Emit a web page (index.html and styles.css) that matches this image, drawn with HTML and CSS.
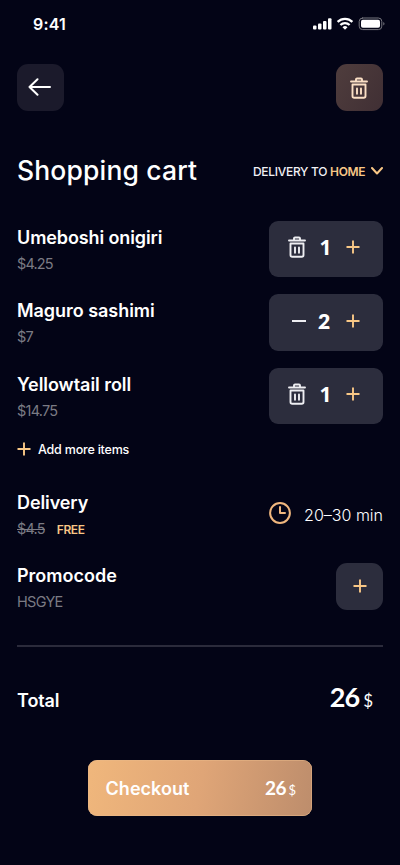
FILE: index.html
```html
<!DOCTYPE html>
<html lang="en">
<head>
<meta charset="utf-8">
<meta name="viewport" content="width=device-width, initial-scale=1">
<title>Shopping cart</title>
<link rel="stylesheet" href="styles.css">
</head>
<body>
<svg class="defs" width="0" height="0" aria-hidden="true">
  <symbol id="trash" viewBox="0 0 18 22">
    <path d="M1 4.500h16M6 4.500V2.500a1 1 0 0 1 1-1h4a1 1 0 0 1 1 1v2M2.500 7.500v11.500a1.800 1.800 0 0 0 1.800 1.800h9.400a1.800 1.800 0 0 0 1.800-1.800V7.500zM7 11.500v5.300M11 11.500v5.300"/>
  </symbol>
  <symbol id="plus" viewBox="0 0 14 14"><path d="M.5 7h13M7 .5v13"/></symbol>
</svg>
<main class="screen">
  <header class="status">
    <span class="time">9:41</span>
    <svg class="signals" width="72" height="14" viewBox="0 0 72 14">
      <g fill="#fff"><rect x="0" y="8.500" width="3.500" height="4" rx="1"/><rect x="5" y="6.500" width="3.500" height="6" rx="1"/><rect x="10" y="4" width="3.500" height="8.500" rx="1"/><rect x="15" y="1.200" width="3.500" height="11.300" rx="1"/></g>
      <g fill="none" stroke="#fff" stroke-width="2.200"><path d="M24.600 4.900a10.500 10.500 0 0 1 14.800 0"/><path d="M27.400 8a6.500 6.500 0 0 1 9.200 0"/></g>
      <path d="M29.500 10.200a3.600 3.600 0 0 1 5 0L32 12.700z" fill="#fff"/>
      <rect x="46.200" y="1" width="22.600" height="11.600" rx="3.400" fill="none" stroke="#77777f"/>
      <rect x="48" y="2.800" width="19" height="8" rx="1.800" fill="#fff"/>
      <path d="M70.300 5v3.600q1.200-.5 1.200-1.800T70.300 5z" fill="#77777f"/>
    </svg>
  </header>

  <nav class="toolbar">
    <button class="square back" aria-label="Back"><svg width="24" height="18" viewBox="0 0 24 18"><path d="M22 9H1.500M9.500 1.200L1.500 9l8 7.800"/></svg></button>
    <button class="square clear" aria-label="Clear cart"><svg class="trash"><use href="#trash"/></svg></button>
  </nav>

  <div class="heading">
    <h1>Shopping cart</h1>
    <div class="address"><span class="to">DELIVERY TO</span><span class="place">HOME</span><svg width="12" height="8" viewBox="0 0 12 8"><path d="M1 1l5 5.500L11 1"/></svg></div>
  </div>

  <section class="items">
    <article class="item">
      <div><h2 class="n1">Umeboshi onigiri</h2><p class="price">$4.25</p></div>
      <div class="stepper"><svg class="trash"><use href="#trash"/></svg><b>1</b><svg class="plus"><use href="#plus"/></svg></div>
    </article>
    <article class="item">
      <div><h2 class="n2">Maguro sashimi</h2><p class="price">$7</p></div>
      <div class="stepper"><svg class="minus" viewBox="0 0 14 2"><path d="M0 1h14"/></svg><b class="two">2</b><svg class="plus"><use href="#plus"/></svg></div>
    </article>
    <article class="item">
      <div><h2 class="n3">Yellowtail roll</h2><p class="price">$14.75</p></div>
      <div class="stepper"><svg class="trash"><use href="#trash"/></svg><b>1</b><svg class="plus"><use href="#plus"/></svg></div>
    </article>
  </section>

  <div class="more"><svg class="plus"><use href="#plus"/></svg><span>Add more items</span></div>

  <section class="row delivery">
    <div><h2 class="n4">Delivery</h2><p class="price"><s>$4.5</s><span class="free">FREE</span></p></div>
    <div class="eta"><svg width="22" height="22" viewBox="0 0 22 22"><circle cx="11" cy="11" r="9.900"/><path d="M11 5v6h5"/></svg><span>20–30 min</span></div>
  </section>

  <section class="row promo">
    <div><h2 class="n5">Promocode</h2><p class="price code">HSGYE</p></div>
    <button class="square add" aria-label="Add promocode"><svg class="plus"><use href="#plus"/></svg></button>
  </section>

  <hr>

  <section class="total"><h2 class="n6">Total</h2><div class="sum"><b>26</b><span>$</span></div></section>

  <button class="checkout"><span class="label">Checkout</span><b>26</b><span class="cur">$</span></button>
</main>
</body>
</html>
```
FILE: styles.css
```css
* { box-sizing: border-box; }
body { margin: 0; background: #030416; color: #fff; font-family: Inter, "Liberation Sans", sans-serif; }
h1, h2, p { margin: 0; white-space: nowrap; }
button { border: 0; padding: 0; color: inherit; font-family: inherit; }
svg { display: block; flex: none; fill: none; stroke-linecap: round; stroke-linejoin: round; }
.defs { position: absolute; }
.screen { width: 400px; height: 865px; padding: 0 17px; overflow: hidden; }

.status { height: 64px; padding: 14px 0 0 16px; display: flex; justify-content: space-between; }
.time { font-size: 16px; line-height: 20px; font-weight: 600; letter-spacing: .2px; }
.signals { margin: 3px -2px 0 0; }
.signals path { stroke-linecap: butt; }

.toolbar { display: flex; justify-content: space-between; height: 47px; }
.square { width: 47px; height: 47px; border-radius: 11px; display: flex; align-items: center; justify-content: center; }
.back { background: #1b1a2b; stroke: #fff; stroke-width: 2; padding: 0 2px 1px 0; }
.clear { background: linear-gradient(120deg, #4f3d3d, #402f34); stroke: #fbdfc5; stroke-width: 1.900; padding: 0 1px 0 0; }
.trash { width: 18px; height: 22px; }

.heading { height: 109.500px; padding-top: 41px; display: flex; justify-content: space-between; }
h1 { font-size: 26.500px; line-height: 36px; font-weight: 500; letter-spacing: .15px; }
.address { display: flex; align-items: center; height: 20px; margin-top: 9px; font-size: 12px; font-weight: 500; white-space: nowrap; }
.to { letter-spacing: -.3px; color: #f1f1f4; }
.place { color: #f8c786; font-weight: 600; margin-left: 3px; letter-spacing: -.4px; }
.address svg { margin-left: 6px; stroke: #f8c786; stroke-width: 2; }

.item { height: 56.500px; margin-bottom: 17px; display: flex; justify-content: space-between; }
.item > div:first-child { padding-top: 4px; }
h2 { font-size: 18px; line-height: 26px; font-weight: 600; }
.n1 { letter-spacing: -.11px; }
.n2, .n3 { letter-spacing: -.04px; }
.price { font-size: 14.500px; line-height: 24px; color: #7b7b84; margin-top: 1px; letter-spacing: -.72px; }
.item .price { letter-spacing: -.85px; }
.item:nth-child(3) .price { letter-spacing: -.75px; }
.stepper { width: 114px; height: 56.500px; padding: 0 23px 3px 19px; background: #2c2d3d; border-radius: 9px; display: grid; grid-template-columns: 19px 34px 19px; align-items: center; stroke: #eeeef2; stroke-width: 1.900; }
.stepper b { font: 700 21px/26px "Open Sans", sans-serif; text-align: center; padding-left: 3px; stroke: none; }
.stepper .two { font: 800 21px/26px Lato, sans-serif; padding-left: 0; }
.minus { width: 14px; height: 2px; justify-self: end; margin-right: 1px; }
.plus { width: 14px; height: 14px; stroke: #f8c786; stroke-width: 1.900; stroke-linecap: butt; }
.stepper .plus { justify-self: end; }

.more { height: 20px; margin-top: -2px; display: flex; align-items: center; gap: 7px; font-size: 12.500px; font-weight: 500; letter-spacing: -.2px; }

.row { display: flex; justify-content: space-between; height: 73px; }
.delivery { margin-top: 30.500px; }
.n4 { letter-spacing: -.1px; }
.price s { letter-spacing: -.8px; }
.price.code { letter-spacing: -.7px; }
.free { color: #f8c786; font-weight: 600; font-size: 12px; margin-left: 12px; letter-spacing: -.4px; }
s { text-decoration-thickness: 1px; }
.eta { display: flex; height: 22px; margin-top: 12px; align-items: center; gap: 13px; font-size: 16px; font-weight: 300; white-space: nowrap; }
.eta svg { stroke: #f0b77e; stroke-width: 2; }
.eta span { padding-top: 4px; }
.add { background: #2c2d3d; margin-top: 0; }

hr { height: 2px; border: 0; margin: 9px 0 0; background: #2b2b3b; }
.total { height: 113px; padding: 41px 10px 0 0; display: flex; justify-content: space-between; }
.n6 { letter-spacing: -.1px; }
.sum, .checkout { font-family: Lato, sans-serif; }
.sum { display: flex; align-items: baseline; height: 36px; margin-top: -9px; }
.sum b { font-size: 27px; line-height: 36px; font-weight: 700; letter-spacing: -1px; }
.sum span { font-size: 17px; font-weight: 400; margin-left: 4px; }
.checkout { display: flex; align-items: baseline; width: 224px; height: 56.500px; margin: 0 auto; padding: 15px 16px 0 17.500px; border-radius: 9px; background: linear-gradient(100deg, #f0b77c, #dfa577 50%, #bd8d6c); box-shadow: inset 0 0 0 .5px #e9b98a; }
.label { font: 600 18px/26px Inter, sans-serif; flex: 1; text-align: left; letter-spacing: .05px; }
.checkout b { font-size: 19px; line-height: 26px; letter-spacing: -.6px; }
.cur { font-size: 13px; margin-left: 2.500px; }
```
